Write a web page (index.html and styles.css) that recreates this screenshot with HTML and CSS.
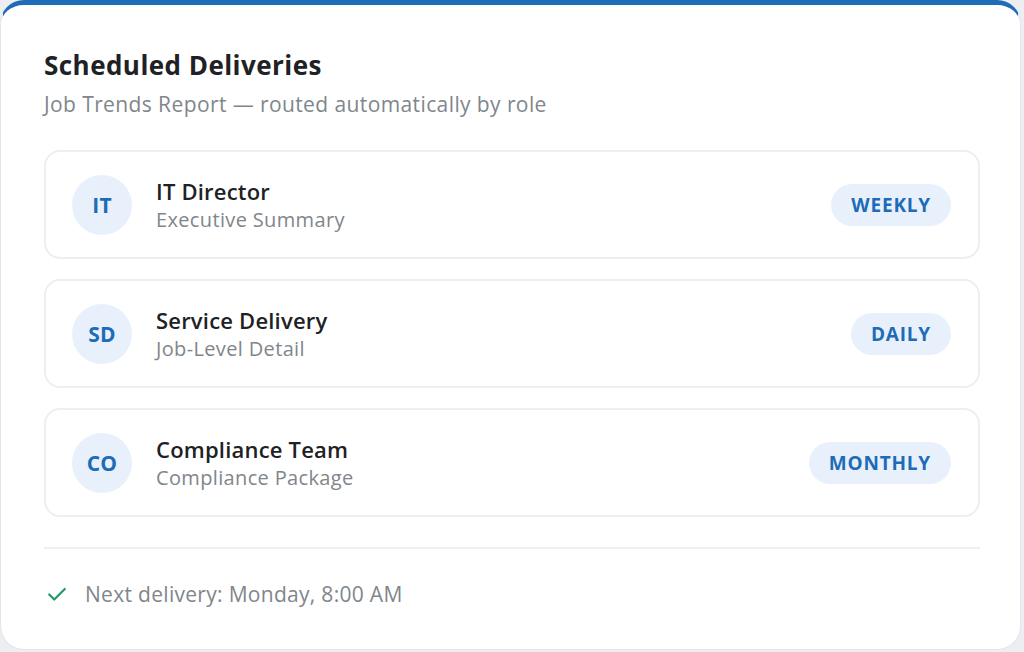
FILE: index.html
```html
<!DOCTYPE html>
<html lang="en">
<head>
    <meta charset="UTF-8">
    <meta name="viewport" content="width=device-width, initial-scale=1.0">
    <title>Scheduled Deliveries</title>
    <link rel="stylesheet" href="styles.css">
</head>
<body>
    <div class="card">
        <h1 class="title">Scheduled Deliveries</h1>
        <p class="subtitle">Job Trends Report — routed automatically by role</p>

        <div class="list">
            <div class="row">
                <div class="avatar">IT</div>
                <div class="info">
                    <div class="name">IT Director</div>
                    <div class="detail">Executive Summary</div>
                </div>
                <span class="badge">WEEKLY</span>
            </div>
            <div class="row">
                <div class="avatar">SD</div>
                <div class="info">
                    <div class="name">Service Delivery</div>
                    <div class="detail">Job-Level Detail</div>
                </div>
                <span class="badge">DAILY</span>
            </div>
            <div class="row">
                <div class="avatar">CO</div>
                <div class="info">
                    <div class="name">Compliance Team</div>
                    <div class="detail">Compliance Package</div>
                </div>
                <span class="badge">MONTHLY</span>
            </div>
        </div>

        <div class="footer">
            <svg class="check" width="22" height="22" viewBox="0 0 24 24" fill="none" stroke="currentColor" stroke-width="2.4" stroke-linecap="round" stroke-linejoin="round">
                <polyline points="3.5 12.5 9 18 20.5 6.5"></polyline>
            </svg>
            <span>Next delivery: Monday, 8:00 AM</span>
        </div>
    </div>
</body>
</html>
```

FILE: styles.css
```css
html, body { margin: 0; height: 100%; overflow: hidden; }
body { background: #eceef2; font-family: "Open Sans", "Noto Sans", sans-serif; color: #1f2328; }

.card {
    box-sizing: border-box;
    width: 1021px;
    height: 650px;
    background: #fff;
    border: 1px solid #e3e6ea;
    border-top: 5px solid #1e6bb8;
    border-radius: 24px;
    padding: 42px 40px 0 43px;
}

.title { margin: 0; font-size: 26px; font-weight: 700; letter-spacing: 0.45px; line-height: 36px; color: #202124; }
.subtitle { margin: 8px 0 0; font-size: 21px; letter-spacing: 0.4px; line-height: 26px; color: #80868b; }

.list { display: flex; flex-direction: column; gap: 20px; margin-top: 33px; }
.row {
    display: flex;
    align-items: center;
    height: 109px;
    box-sizing: border-box;
    padding: 0 27px 0 26px;
    border: 2px solid #eceef1;
    border-radius: 16px;
}
.avatar {
    width: 60px; height: 60px;
    border-radius: 50%;
    background: #e8f1fb;
    color: #1e6bb8;
    font-weight: 700;
    font-size: 21px;
    letter-spacing: 0.3px;
    display: flex; align-items: center; justify-content: center;
    flex-shrink: 0;
}
.info { flex: 1; margin-left: 24px; }
.name { font-size: 22px; font-weight: 600; letter-spacing: 0.2px; line-height: 30px; color: #202124; }
.detail { font-size: 20px; letter-spacing: 0.35px; line-height: 28px; color: #80868b; }
.badge {
    background: #e8f1fb;
    color: #1e6bb8;
    font-weight: 700;
    font-size: 19px;
    letter-spacing: 0.8px;
    padding: 0 20px;
    height: 42px; line-height: 42px;
    border-radius: 21px;
}

.footer {
    margin-top: 30px;
    border-top: 2px solid #eef0f3;
    padding-top: 31px;
    display: flex; align-items: center; gap: 17px;
    font-size: 21px; letter-spacing: 0.3px; color: #80868b;
}
.check { color: #23996a; margin-left: 2px; }
```
